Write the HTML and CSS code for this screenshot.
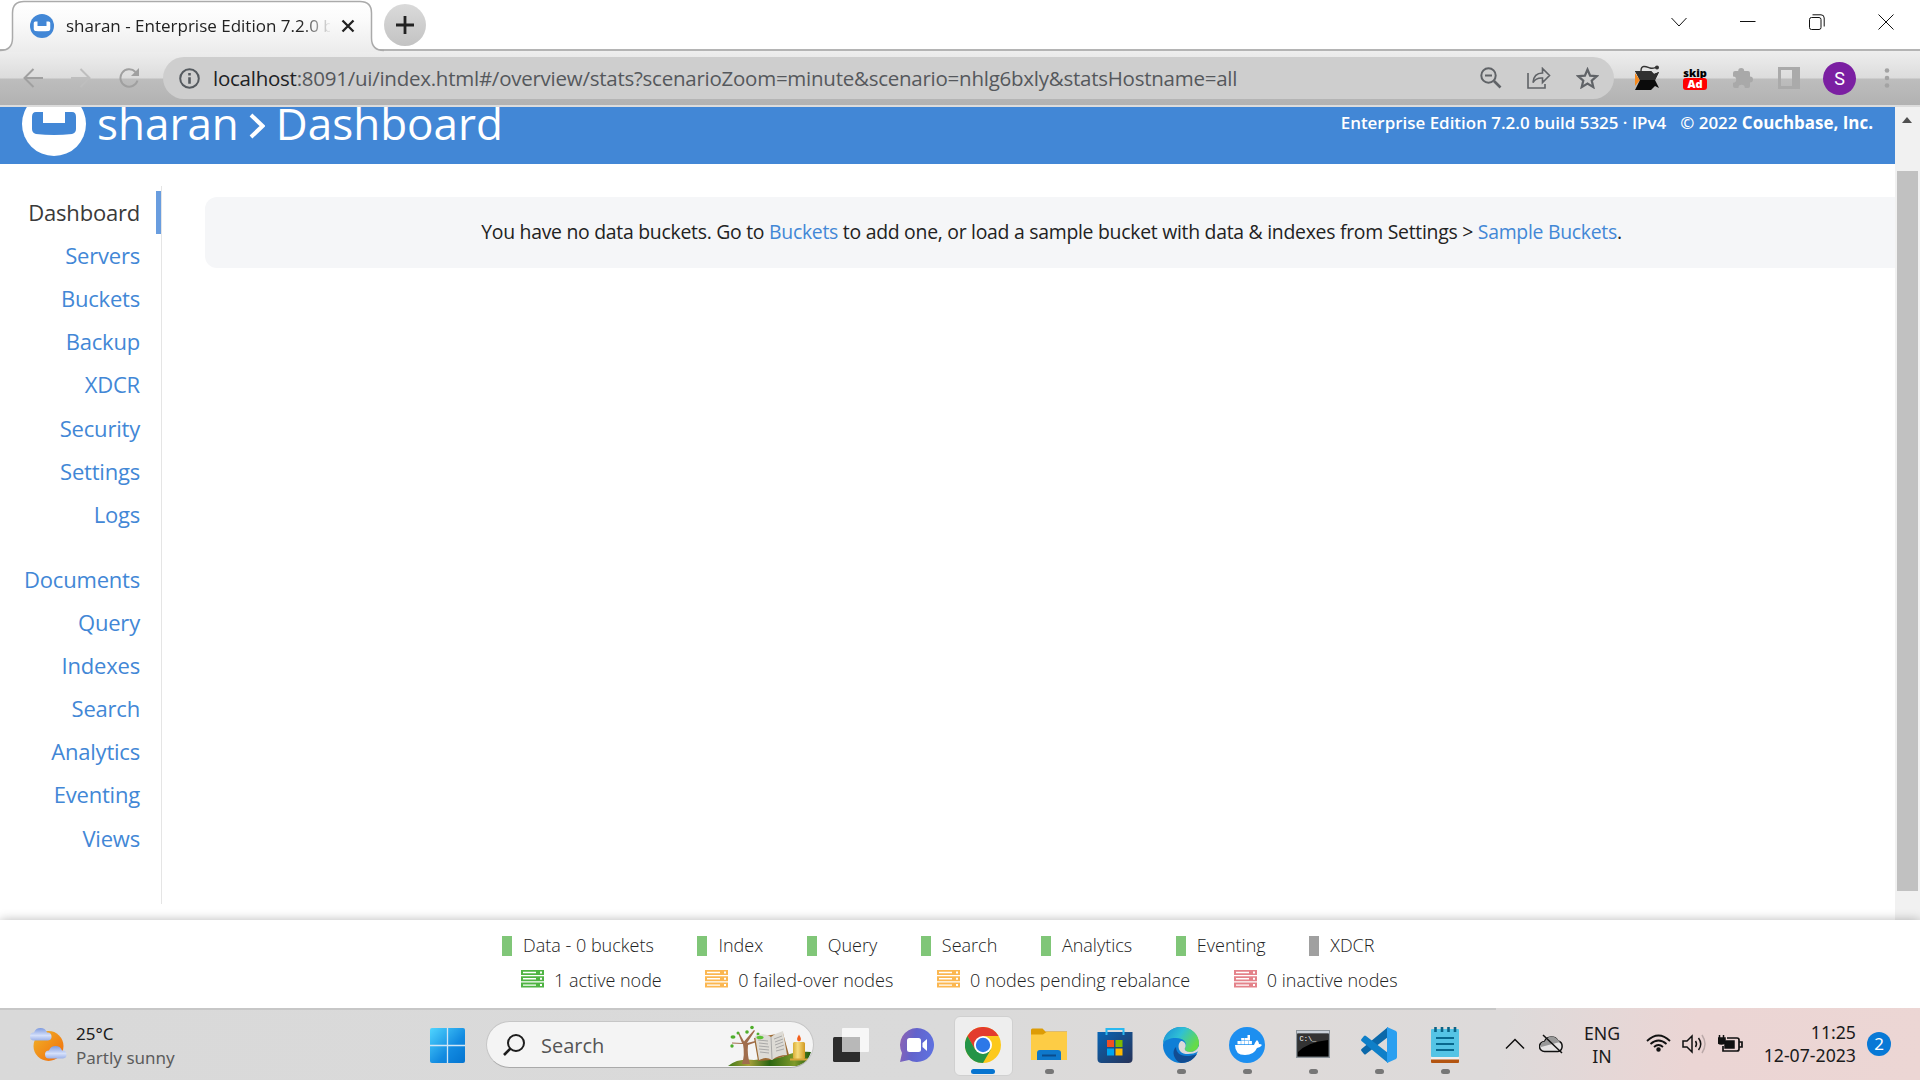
FILE: index.html
```html
<!DOCTYPE html>
<html lang="en">
<head>
<meta charset="utf-8">
<title>sharan - Enterprise Edition 7.2.0</title>
<link rel="stylesheet" href="styles.css">
</head>
<body>
<div class="screen">
  <header class="tabstrip">
    <svg class="tabshape" width="386" height="52" viewBox="0 0 386 52"><defs><linearGradient id="tabg" x1="0" y1="0" x2="0" y2="1"><stop offset="0" stop-color="#fff"/><stop offset=".4" stop-color="#fafafa"/><stop offset="1" stop-color="#ececec"/></linearGradient></defs><path d="M0 50.5C8 50.5 12.500 46 12.500 38V13Q12.500 1.500 24 1.500H360Q371.500 1.500 371.500 13V38Q371.500 50.500 383 50.500V52H0Z" fill="url(#tabg)"/><path d="M0 50.500C8 50.500 12.500 46 12.500 38V13Q12.500 1.500 24 1.500H360Q371.500 1.500 371.500 13V38Q371.500 50.500 384 50.500" fill="none" stroke="#aaa" stroke-width="1.500"/></svg>
    <div class="tab">
      <svg width="24" height="24" viewBox="0 0 64 64"><circle cx="32" cy="32" r="32" fill="#4287d6"/><path d="M10 24q0-4 4-4h6v12h24V20h6q4 0 4 4v16q0 4-4 5-18 2-36 0-4-1-4-5z" fill="#fff"/></svg>
      <span class="tab-title">sharan - Enterprise Edition 7.2.0 b</span>
      <svg width="14" height="14" viewBox="0 0 14 14"><path d="M1.500 1.500l11 11M12.500 1.500l-11 11" stroke="#222" stroke-width="2.300"/></svg>
    </div>
    <div class="newtab"><svg width="18" height="18" viewBox="0 0 18 18"><path d="M9 0v18M0 9h18" stroke="#222" stroke-width="2.800"/></svg></div>
    <div class="wincontrols">
      <svg width="16" height="16" viewBox="0 0 16 16"><path d="M.5 4l7.500 8 7.500-8"/></svg>
      <svg width="16" height="16" viewBox="0 0 16 16"><path d="M0 7.500h15.500"/></svg>
      <svg width="16" height="16" viewBox="0 0 16 16"><rect x=".5" y="3.500" width="11.500" height="12" rx="2"/><path d="M3.500 .8H12q3.200 0 3.200 3.200V12.500"/></svg>
      <svg width="16" height="16" viewBox="0 0 16 16"><path d="M.5 .5l15 15M15.500 .5l-15 15"/></svg>
    </div>
  </header>

  <div class="toolbar">
    <div class="navbuttons">
      <svg width="20" height="20" viewBox="0 0 20 20" stroke="#a0a0a0"><path d="M20 10H2M10.500 1L1.500 10l9 9"/></svg>
      <svg width="20" height="20" viewBox="0 0 20 20" stroke="#bebebe"><path d="M0 10h18M9.500 1l9 9-9 9"/></svg>
      <svg width="21" height="20" viewBox="0 0 21 20" stroke="#a0a0a0"><path d="M18.500 12.500a8.700 8.700 0 1 1-2-8.500"/><path d="M20 0v8h-8z" fill="#a0a0a0" stroke="none"/></svg>
    </div>
    <div class="omnibox">
      <svg width="21" height="21" viewBox="0 0 21 21" fill="none" stroke="#555a5f"><circle cx="10.500" cy="10.500" r="9.300" stroke-width="2"/><path d="M10.500 9.300v6.500M10.500 5v2.600" stroke-width="2.600"/></svg>
      <span class="url"><b>localhost</b>:8091/ui/index.html#/overview/stats?scenarioZoom=minute&amp;scenario=nhlg6bxly&amp;statsHostname=all</span>
      <div class="omni-actions">
        <svg width="22" height="22" viewBox="0 0 22 22"><circle cx="8.500" cy="8.500" r="7.200"/><path d="M14 14l6.500 6.500" stroke-width="2.600"/><path d="M5 8.500h7"/></svg>
        <svg width="24" height="22" viewBox="0 0 24 22" stroke-width="1.600"><path d="M1 6v15h17v-4M6 15.500c.5-6 4-9.500 9.500-9.500V1.500L22.500 8.500l-7 7V11Q9 10.500 6 15.500z"/></svg>
        <svg width="23" height="22" viewBox="0 0 23 22"><path d="M11.500 2.500l2.600 6.200 6.700.5-5.100 4.400 1.600 6.500-5.800-3.500-5.800 3.500 1.600-6.500-5.100-4.400 6.700-.5z" stroke-width="2.200"/></svg>
      </div>
    </div>
    <div class="extensions">
      <svg width="26" height="26" viewBox="0 0 26 26"><path d="M1 8l5 7-5 6z" fill="#f58a1f"/><path d="M1 6H17l3 3 5-2-4 8 4 8-4-2-4 4H1l5-10z" fill="#0b0b0b"/><path d="M1 6H17l3 3 5-2-4 8H6z" fill="#303030"/><path d="M7 6c0-7 6-4 9-3 3 1 4 0 7-1" fill="none" stroke="#333" stroke-width="1.400"/><circle cx="23" cy="2.500" r="2" fill="#333"/></svg>
      <div class="skip"><span>skip</span><span class="ad">Ad</span></div>
      <svg width="22" height="22" viewBox="0 0 22 22"><path d="M3 4h3.200a3 3 0 0 1 6 0H16q2 0 2 2v3.500a3 3 0 0 1 0 6V19q0 2-2 2h-3.200a3.200 3.200 0 0 0-6.400 0H3q-2 0-2-2v-3.200a3.200 3.200 0 0 0 0-6.400V6q0-2 2-2z" fill="#a9a9a9"/></svg>
      <svg width="22" height="22" viewBox="0 0 22 22"><rect x="1.500" y="1.500" width="19" height="19" fill="none" stroke="#aaa" stroke-width="3"/><path d="M14 1h7v20h-7z" fill="#aaa"/></svg>
      <div class="avatar">S</div>
      <svg width="6" height="20" viewBox="0 0 6 20" fill="#a3a3a3"><circle cx="3" cy="2.500" r="2.300"/><circle cx="3" cy="10" r="2.300"/><circle cx="3" cy="17.500" r="2.300"/></svg>
    </div>
  </div>

  <div class="viewport">
    <div class="page">
      <div class="appbar">
        <div class="brand">
          <svg width="64" height="64" viewBox="0 0 64 64"><circle cx="32" cy="32" r="32" fill="#fff"/><path d="M10 25q0-5 4-5h7v11h22V20h7q4 0 4 5v12q0 4-4 5-18 2-36 0-4-1-4-5z" fill="#4287d6"/></svg>
          <span class="crumb-a">sharan</span>
          <svg class="chev" width="16" height="26" viewBox="0 0 16 26"><path d="M2 2l11.500 11L2 24" fill="none" stroke="#fff" stroke-width="4"/></svg>
          <span class="crumb-b">Dashboard</span>
        </div>
        <div class="version"><span class="edition">Enterprise Edition 7.2.0 build 5325 · IPv4</span><span class="copy">© 2022 <b>Couchbase, Inc.</b></span></div>
      </div>
      <div class="content">
        <nav class="sidebar">
          <a class="active">Dashboard</a><a>Servers</a><a>Buckets</a><a>Backup</a><a>XDCR</a><a>Security</a><a>Settings</a><a>Logs</a>
          <a class="second">Documents</a><a>Query</a><a>Indexes</a><a>Search</a><a>Analytics</a><a>Eventing</a><a>Views</a>
        </nav>
        <main class="main"><div class="notice"><span>You have no data buckets. Go to <a>Buckets</a> to add one, or load a sample bucket with data &amp; indexes from Settings &gt; <a>Sample Buckets</a>.</span></div></main>
      </div>
    </div>
    <div class="scrollbar"><i class="arrow"></i><i class="thumb"></i></div>
  </div>

  <svg class="defs" width="0" height="0"><symbol id="srv" viewBox="0 0 23 18"><path d="M0 0h23v5H0zM0 6.300h23v5H0zM0 12.600h23v5H0z" fill="currentColor"/><path d="M2 1.800h13v1.400H2zM2 8.100h13v1.400H2zM2 14.400h13v1.400H2zM19 1.500h2v2h-2zM19 7.800h2v2h-2zM19 14.100h2v2h-2z" fill="#fff"/></symbol></svg>
  <footer class="status">
    <div class="services"><span>Data - 0 buckets</span><span>Index</span><span>Query</span><span>Search</span><span>Analytics</span><span>Eventing</span><span class="off">XDCR</span></div>
    <div class="nodes">
      <span><svg class="green" width="23" height="18"><use href="#srv"/></svg>1 active node</span>
      <span><svg class="amber" width="23" height="18"><use href="#srv"/></svg>0 failed-over nodes</span>
      <span><svg class="amber" width="23" height="18"><use href="#srv"/></svg>0 nodes pending rebalance</span>
      <span><svg class="red" width="23" height="18"><use href="#srv"/></svg>0 inactive nodes</span>
    </div>
  </footer>

  <div class="taskbar">
    <div class="weather">
      <svg width="37" height="36" viewBox="0 0 37 36"><defs><linearGradient id="sun" x1="0" y1="0" x2="1" y2="1"><stop offset="0" stop-color="#f0b429"/><stop offset="1" stop-color="#f26a0a"/></linearGradient><linearGradient id="cl" x1="0" y1="0" x2="0" y2="1"><stop offset="0" stop-color="#7f9be0"/><stop offset=".6" stop-color="#d5e0fa"/><stop offset="1" stop-color="#9db2e8"/></linearGradient></defs><circle cx="18.500" cy="20" r="15" fill="url(#sun)"/><path d="M4 14.500a4 4 0 0 1 0-8 7 7 0 0 1 13 0 4 4 0 0 1 1 8z" fill="url(#cl)"/><path d="M19 32.500a4 4 0 0 1 0-8 7 7 0 0 1 13 0 4 4 0 0 1 1 8z" fill="url(#cl)"/></svg>
      <div class="wtext"><span class="temp">25°C</span><span class="cond">Partly sunny</span></div>
    </div>
    <div class="apps">
      <svg class="start" width="35" height="35" viewBox="0 0 35 35"><defs><linearGradient id="win" x1="0" y1="0" x2="1" y2="1"><stop offset="0" stop-color="#4fd5ff"/><stop offset=".6" stop-color="#128ae0"/><stop offset="1" stop-color="#0474d0"/></linearGradient></defs><rect width="35" height="35" rx="2" fill="url(#win)"/><path d="M17.500 0v35M0 17.500h35" stroke="#d0e5f5" stroke-width="1.300"/></svg>
      <div class="search">
        <svg width="22" height="22" viewBox="0 0 22 22" fill="none" stroke="#1d1d1d"><circle cx="13" cy="9" r="8" stroke-width="2"/><path d="M7.500 14.500L1 21" stroke-width="2.600"/></svg>
        <span>Search</span>
        <svg class="art" width="84" height="42" viewBox="0 0 84 42"><defs><linearGradient id="hill" x1="0" y1="0" x2="1" y2="0"><stop offset="0" stop-color="#3f7a18"/><stop offset=".25" stop-color="#a8a03a"/><stop offset=".5" stop-color="#2b6612"/><stop offset=".8" stop-color="#7f9a2a"/><stop offset="1" stop-color="#1f5a0e"/></linearGradient><linearGradient id="wax" x1="0" y1="0" x2="1" y2="0"><stop offset="0" stop-color="#d9ae35"/><stop offset=".4" stop-color="#f7dc7c"/><stop offset="1" stop-color="#d19a22"/></linearGradient></defs><path d="M0 41Q10 33 26 35L54 32Q66 26 83 27 80 38 70 41z" fill="url(#hill)"/><path d="M14 39q3-9 1-20L4 18.500v-1l10 .5L10 8l1-.500 5 9L26 5l1 .8L19 18l12-3 .4 1L20 20q-1 10 2 19z" fill="#a06d4c"/><g fill="#4fae2c"><ellipse cx="5" cy="12" rx="2.500" ry="1.800"/><circle cx="4" cy="21" r="1.700"/><circle cx="10" cy="8" r="1.500"/><circle cx="19" cy="7" r="1.800"/><circle cx="24" cy="2.500" r="1.800"/><circle cx="30" cy="9" r="1.500"/></g><path d="M26 13l29-5 6 22-18 5-13 1z" fill="#9c6a34"/><path d="M27 11q10-4 16 1 5-4 12-6l4 24q-9 0-15 5-6-4-13 0z" fill="#dddbd5"/><path d="M43 12l1 22M30 15l10 1M31 18l9 1M31 21l10 1M31 24l10 1M32 27l9 1M46 14l8-3M47 17l8-3M47 20l8-3M48 23l8-3M48 26l8-2" stroke="#9a9a9a" stroke-width=".8" fill="none"/><ellipse cx="32" cy="12.500" rx="3.500" ry="1.700" fill="#5cc235"/><rect x="65" y="17" width="12" height="17" rx="1.500" fill="url(#wax)"/><path d="M62 34.500h18" stroke="#d8a63a" stroke-width="2"/><path d="M71 9.500q4 6 0 7-4-1 0-7z" fill="#f4601c"/></svg>
      </div>
      <div class="app"><svg width="36" height="36" viewBox="0 0 36 36"><rect x="0" y="10" width="27" height="25" rx="1.500" fill="#2c2c2c"/><rect x="9" y="1" width="27" height="24" rx="1" fill="#f7f7f7"/><path d="M9 10h18v15H9z" fill="#b8b8b8"/></svg></div>
      <div class="app"><svg width="36" height="36" viewBox="0 0 36 36"><defs><linearGradient id="chat" x1="0" y1=".4" x2="1" y2=".6"><stop offset="0" stop-color="#8b63b5"/><stop offset=".4" stop-color="#6263cc"/><stop offset="1" stop-color="#5f72e0"/></linearGradient></defs><path d="M18 1a17 17 0 1 1-8 32L1 35l2-9A17 17 0 0 1 18 1z" fill="url(#chat)"/><rect x="8" y="11" width="14" height="14" rx="2.500" fill="#fff"/><path d="M23.500 16l4.500-4v12l-4.500-4z" fill="#fff"/></svg></div>
      <div class="app on current"><svg width="36" height="36" viewBox="0 0 36 36"><circle cx="18" cy="18" r="18" fill="#fcc91c"/><path d="M2.400 9A18 18 0 0 1 33.600 9H18L10 22.500z" fill="#e33b2e"/><path d="M2.400 9A18 18 0 0 0 18 36L25.800 22.500 18 27 10.200 22.500z" fill="#249447"/><circle cx="18" cy="18" r="9" fill="#fff"/><circle cx="18" cy="18" r="7.200" fill="#2d78e8"/></svg></div>
      <div class="app on"><svg width="36" height="34" viewBox="0 0 36 34"><path d="M0 3q0-1.500 1.500-1.500H11.500l3 3H36v8H0z" fill="#dd9c06"/><path d="M0 7.500h12l3.500-2.500H36v28H0z" fill="#fdcc45"/><path d="M6 33V26q0-3 3-3h18q3 0 3 3v7z" fill="#0e78cb"/><path d="M11 28.500h14" stroke="#0a4c8c" stroke-width="2"/></svg></div>
      <div class="app"><svg width="36" height="36" viewBox="0 0 36 36"><defs><linearGradient id="store" x1="0" y1="0" x2="1" y2="1"><stop offset="0" stop-color="#0865b5"/><stop offset="1" stop-color="#273257"/></linearGradient></defs><path d="M.5 5h35v27q0 4-4 4h-27q-4 0-4-4z" fill="url(#store)"/><path d="M9.500 8V2h17v6" fill="none" stroke="#29b8f0" stroke-width="2"/><path d="M10 13h7v7h-7z" fill="#f25022"/><path d="M18.500 13h7v7h-7z" fill="#7fba00"/><path d="M10 21.500h7v7h-7z" fill="#00a4ef"/><path d="M18.500 21.500h7v7h-7z" fill="#ffb900"/></svg></div>
      <div class="app on"><svg width="36" height="36" viewBox="0 0 36 36"><defs><linearGradient id="eg" x1="0" y1="0" x2="1" y2=".5"><stop offset="0" stop-color="#188bd8"/><stop offset=".5" stop-color="#2fc0d5"/><stop offset="1" stop-color="#65db49"/></linearGradient></defs><circle cx="18" cy="18" r="18" fill="#0f7fd6"/><path d="M0 16C1 6 9 0 18 0c10 0 18 7 18 16 0 6-4 9-9 9-4 0-6-2-5-4 3-6-2-10-9-10C7 11 2 13 0 16z" fill="url(#eg)"/><path d="M13 20c0 7 7 12 21 7-3 5-8 9-16 9-7-2-10-12-5-16z" fill="#124c91"/><path d="M18 14c-4 3-4 13 7 13 4 0 7-1 9-2l4-3-2-3q-3 6-9 6c-4 0-6-2-5-4 2-4-1-7-4-7z" fill="#dcdada"/></svg></div>
      <div class="app on"><svg width="36" height="36" viewBox="0 0 36 36"><circle cx="18" cy="18" r="18" fill="#1d8ff0"/><path d="M6 18h19q1-3 3-5 2 2 2 4 2 0 3 1-2 3-5 3-3 7-12 7-10 0-10-10z" fill="#fff"/><path d="M8.500 14h3.300v3.300H8.500zM12.200 14h3.300v3.300h-3.300zM15.900 14h3.300v3.300h-3.300zM19.600 14h3.300v3.300h-3.300zM12.200 11h3.300v2.600h-3.300zM15.900 11h3.300v2.600h-3.300zM18.500 8h2.500v5.600h-2.500z" fill="#fff"/></svg></div>
      <div class="app on"><svg class="cmd" width="34" height="28" viewBox="0 0 34 28"><rect x=".7" y=".7" width="32.600" height="26.600" fill="#000" stroke="#8c9399" stroke-width="1.400"/><path d="M1 1h32v2.500H1z" fill="#c9d0d8"/><path d="M2 4h30v6Q12 12 2 22z" fill="#333"/><text x="3.500" y="11" class="prompt">C:\_</text></svg></div>
      <div class="app on"><svg width="36" height="36" viewBox="0 0 36 36"><path d="M27 0v10L5 27q-1 1-2 0l-2.500-3q-.8-1 0-2z" fill="#0b68aa"/><path d="M27 36V26L5 9q-1-1-2 0L.5 12q-.8 1 0 2z" fill="#0f7fc8"/><path d="M26 0l9 4q1 1 1 2v24q0 1-1 2l-9 4z" fill="#2a9ff0"/></svg></div>
      <div class="app on"><svg width="30" height="36" viewBox="0 0 30 36"><rect x="1" y="2" width="28" height="28" rx="1" fill="#55c4e5"/><path d="M1 30h28v3H1z" fill="#f0eeee"/><path d="M1 32.500h28V35q0 1-1 1H2q-1 0-1-1z" fill="#b35410"/><path d="M6 11h18M6 17h18M6 23h18" stroke="#08688e" stroke-width="1.800"/><path d="M5.500 0v5M12 0v5M18.500 0v5M25 0v5" stroke="#0b6386" stroke-width="2.600"/></svg></div>
    </div>
    <div class="tray">
      <svg width="20" height="12" viewBox="0 0 20 12"><path d="M1 10.500l9-9 9 9"/></svg>
      <svg class="cloud" width="25" height="20" viewBox="0 0 25 20"><path d="M5.500 17.500a5 5 0 0 1 0-10A7.500 7.500 0 0 1 19 7a5.400 5.400 0 0 1 0 10.500z" fill="#e6e4e4"/><path d="M2 13Q1 8 6 7.500 10 0 17 4L21 8z" fill="#999" stroke="none"/><path d="M4 1l19 18"/></svg>
      <div class="lang"><span>ENG</span><span>IN</span></div>
      <svg class="wifi" width="25" height="18" viewBox="0 0 25 18"><path d="M1 7q11.500-11 23 0M4.500 10q8-7 16 0M8 13q4.500-4 9 0" stroke-width="1.800"/><circle cx="12.500" cy="15.500" r="1.500" fill="#111"/></svg>
      <svg class="vol" width="25" height="20" viewBox="0 0 25 20"><path d="M1 7h4l5-5v16l-5-5H1zM13.500 7q2 3 0 6M16.500 4q4.500 6 0 12"/><path d="M20 1q6 9 0 18" stroke="#bba9a9"/></svg>
      <svg class="bat" width="25" height="20" viewBox="0 0 25 20"><path d="M9 4h10q2 0 2 2v9q0 2-2 2H5v-5M21.500 8h2.500v5h-2.500" stroke-width="1.700"/><path d="M8 7h8v7H7v-5z" fill="#111"/><path d="M0 4h7v4q0 2-3.500 2Q0 10 0 8zM1.500 1v3M5.500 1v3" fill="#111"/></svg>
      <div class="clock"><span>11:25</span><span>12-07-2023</span></div>
      <div class="badge">2</div>
    </div>
  </div>
</div>
</body>
</html>
```
FILE: styles.css
```css
* { box-sizing: border-box; }
body { margin: 0; font-family: "Open Sans", "Noto Sans", sans-serif; background: #fff; overflow: hidden; }
svg { display: block; flex: none; }
.defs { position: absolute; }
.screen { width: 1920px; height: 1080px; display: flex; flex-direction: column; overflow: hidden; }

.tabstrip { height: 51px; flex: none; display: flex; position: relative; border-bottom: 2px solid #b4b4b4; background: #fff; }
.tabshape { position: absolute; left: 0; top: 0; }
.tab { position: relative; width: 384px; height: 51px; padding-left: 30px; display: flex; align-items: center; }
.tab-title { width: 264px; margin: 0 11px 0 12px; font-size: 17px; letter-spacing: 0; white-space: nowrap; overflow: hidden; color: #222; -webkit-mask-image: linear-gradient(90deg, #000 235px, transparent 266px); }
.newtab { width: 42px; height: 42px; margin-top: 4px; border-radius: 50%; background: linear-gradient(#dadada, #c3c3c3); display: flex; align-items: center; justify-content: center; }
.wincontrols { margin-left: auto; padding: 14px 26px 0 0; display: flex; gap: 53px; fill: none; stroke: #111; stroke-width: 1; }

.toolbar { height: 56px; flex: none; display: flex; align-items: center; padding-bottom: 2px; background: linear-gradient(#eee 0, #dcdcdc 27px, #bdbdbd 28px, #b2b2b2 54px, #dcdcdc 54px); }
.navbuttons { width: 163px; flex: none; padding-left: 23px; display: flex; gap: 28px; fill: none; stroke-width: 2; }
.omnibox { width: 1451px; flex: none; height: 42px; border-radius: 21px; background: #cecece; padding: 0 15px 0 16px; display: flex; align-items: center; }
.url { margin-left: 13px; font-size: 20.5px; letter-spacing: -0.25px; color: #55585c; white-space: nowrap; }
.url b { font-weight: 400; color: #202124; }
.omni-actions { margin-left: auto; display: flex; gap: 25px; fill: none; stroke: #606367; stroke-width: 2; }
.extensions { padding-left: 20px; display: flex; align-items: center; gap: 24px; }
.skip { width: 24px; margin: 0 1px 0 -1px; display: flex; flex-direction: column; align-items: center; font: 800 11px/11px "Open Sans", sans-serif; color: #000; }
.skip .ad { width: 24px; height: 12px; border-radius: 3px; background: #f00; color: #fff; text-align: center; line-height: 11px; }
.avatar { width: 33px; height: 33px; margin: 0 4px 0 -1px; border-radius: 50%; background: #7b1fa2; color: #fff; font: 18px/33px Roboto, sans-serif; text-align: center; }

.viewport { height: 813px; flex: none; display: flex; }
.page { width: 1895px; }
.appbar { height: 57px; background: #4287d6; color: #fff; display: flex; justify-content: space-between; overflow: hidden; }
.brand { display: flex; align-items: flex-start; padding-left: 22px; font-size: 44px; line-height: 60px; }
.brand > svg { margin-top: -15px; }
.brand > span { margin-top: -14px; }
.crumb-a { margin-left: 11px; }
.brand > .chev { margin: 6px 11px 0 10px; }
.version { padding-right: 22px; display: flex; gap: 14px; font-size: 16.950px; line-height: 32px; font-weight: 600; }
.version b { font-weight: 700; }
.content { display: flex; }
.sidebar { width: 162px; height: 718px; margin-top: 22px; padding-top: 5px; border-right: 1px solid #e5e5e5; display: flex; flex-direction: column; }
.sidebar a { height: 43.120px; padding-right: 21px; text-align: right; font-size: 22px; letter-spacing: -0.2px; line-height: 43px; color: #4287d6; }
.sidebar .active { color: #3a3a3a; border-right: 5px solid #699ddf; padding-right: 16px; }
.sidebar .second { margin-top: 22px; }
.main { flex: 1; padding: 33px 0 0 43px; }
.notice { height: 71px; padding: 0 0 2px 3px; border-radius: 12px 0 0 12px; background: #f5f6f8; display: flex; align-items: center; justify-content: center; font-size: 19.4px; letter-spacing: -0.27px; color: #222; white-space: nowrap; }
.notice a { color: #4287d6; }
.scrollbar { width: 25px; background: #f1f1f1; }
.scrollbar i { display: block; }
.arrow { width: 0; height: 0; margin: 10px 0 0 7px; border: 5.5px solid transparent; border-top: 0; border-bottom: 6px solid #505050; }
.thumb { width: 21px; height: 720px; margin: 48px 0 0 2px; background: #c1c1c1; }

.status { height: 88px; flex: none; padding-top: 11px; position: relative; background: #fff; box-shadow: 0 0 10px rgba(0, 0, 0, .28); font-size: 18px; font-weight: 300; color: #222; white-space: nowrap; }
.services, .nodes { display: flex; gap: 43.6px; line-height: 29px; }
.services { padding-left: 502px; height: 35px; }
.services span { display: flex; gap: 11px; }
.services span::before { content: ""; width: 10px; height: 20px; margin-top: 5px; background: #80c678; }
.services .off::before { background: #a0a0a0; }
.nodes { padding-left: 521px; }
.nodes span { display: flex; gap: 10px; }
.nodes svg { margin-top: 4px; }
.green { color: #4fb443; }
.amber { color: #fbb751; }
.red { color: #e4828a; }

.taskbar { height: 72px; flex: none; position: relative; display: flex; background: linear-gradient(100deg, #d9d9d9 0, #dadada 50%, #dedad9 65%, #dddada 78%, #ebd5d4 88%, #ecd6d4 100%); }
.taskbar::before { content: ""; position: absolute; left: 0; top: 0; width: 1496px; height: 2px; background: #c7c7c7; }
.weather { width: 430px; padding: 14px 0 0 30px; display: flex; font-size: 17px; }
.weather > svg { margin-top: 4px; }
.wtext { margin-left: 9px; display: flex; flex-direction: column; line-height: 24px; font-family: "Noto Sans", sans-serif; }
.temp { color: #1b1b1b; }
.cond { color: #5c5c5c; }
.apps { display: flex; }
.start { margin-top: 20px; }
.search { width: 328px; height: 47px; margin: 13px 4px 0 21px; padding: 0 0 0 16px; border: 1.5px solid #c6c6c6; border-bottom-color: #aaa; border-radius: 24px; background: #f4f4f4; display: flex; align-items: center; overflow: hidden; font-size: 20px; color: #555; }
.search span { margin: 1px 0 0 16px; }
.art { margin: 2px 1px 0 auto; }
.app { width: 66px; height: 72px; position: relative; display: flex; justify-content: center; padding-top: 19px; }
.app > svg { position: relative; }
.app > .cmd { margin-top: 3px; }
.app.on::after { content: ""; position: absolute; left: 29px; bottom: 6px; width: 9px; height: 5px; border-radius: 3px; background: #777; }
.app.current::before { content: ""; position: absolute; left: 4px; top: 8px; width: 57px; height: 58px; border-radius: 6px; background: #eee; border: 1px solid #d0d0d0; }
.app.current::after { left: 21px; width: 24px; background: #0674d0; }
.prompt { font: 7px "Liberation Mono", monospace; fill: #fff; stroke: none; }
.tray { margin-left: auto; padding-right: 29px; display: flex; color: #1b1b1b; font: 17.7px/23px "Noto Sans", sans-serif; fill: none; stroke: #111; stroke-width: 1.5; }
.tray > svg { margin-top: 26px; }
.tray > svg:first-child { margin-top: 30px; }
.tray .cloud { margin-left: 14px; }
.tray .wifi { margin-left: 26px; }
.tray .vol { margin-left: 11px; }
.tray .bat { margin-left: 11px; }
.lang { width: 36px; margin: 14px 0 0 20px; text-align: center; display: flex; flex-direction: column; align-items: center; }
.clock { width: 100px; margin: 13px 0 0 13px; text-align: right; display: flex; flex-direction: column; align-items: flex-end; white-space: nowrap; }
.badge { width: 24px; height: 24px; margin: 24px 0 0 11px; border-radius: 50%; background: #0879d6; color: #fff; font-size: 17px; text-align: center; }
```
